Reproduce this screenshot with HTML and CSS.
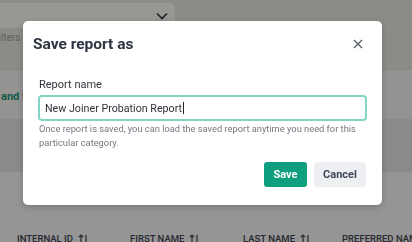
FILE: index.html
```html
<!DOCTYPE html>
<html lang="en">
<head>
    <meta charset="UTF-8">
    <meta name="viewport" content="width=device-width, initial-scale=1.0">
    <title>Save report as</title>
    <link rel="stylesheet" href="styles.css">
</head>
<body>

<div class="page">
    <div class="filter-bar">
        <div class="dropdown">
            <svg class="chevron" width="12" height="8" viewBox="0 0 12 8"><path d="M1 1.5 L6 6.5 L11 1.5" fill="none" stroke="#333" stroke-width="1.6"/></svg>
        </div>
        <div class="filter-label">Filters :</div>
    </div>
    <div class="section-head">
        <div class="section-title">and tenure details</div>
    </div>
    <div class="toolbar"></div>
    <div class="table-head">
        <div class="col">Internal ID <svg class="sort" width="10" height="9" viewBox="0 0 10 9"><path d="M3 8.5 V1 M0.8 3.2 L3 1 L5.2 3.2 M8 1 V8.5" fill="none" stroke="currentColor" stroke-width="1.2"/></svg></div>
        <div class="col">First Name <svg class="sort" width="10" height="9" viewBox="0 0 10 9"><path d="M3 8.5 V1 M0.8 3.2 L3 1 L5.2 3.2 M8 1 V8.5" fill="none" stroke="currentColor" stroke-width="1.2"/></svg></div>
        <div class="col col-short">Last Name <svg class="sort" width="10" height="9" viewBox="0 0 10 9"><path d="M3 8.5 V1 M0.8 3.2 L3 1 L5.2 3.2 M8 1 V8.5" fill="none" stroke="currentColor" stroke-width="1.2"/></svg></div>
        <div class="col">Preferred Name</div>
    </div>
</div>

<div class="overlay"></div>

<div class="modal">
    <div class="modal-header">
        <div class="modal-title">Save report as</div>
        <svg class="close" width="10" height="10" viewBox="0 0 10 10"><path d="M1 1 L9 9 M9 1 L1 9" fill="none" stroke="#555c66" stroke-width="1.3"/></svg>
    </div>
    <div class="modal-body">
        <div class="field-label">Report name</div>
        <div class="text-input">New Joiner Probation Report<span class="caret"></span></div>
        <div class="help">Once report is saved, you can load the saved report anytime you need for this particular category.</div>
    </div>
    <div class="modal-footer">
        <div class="btn btn-save">Save</div>
        <div class="btn btn-cancel">Cancel</div>
    </div>
</div>

</body>
</html>
```

FILE: styles.css
```css
body {
    margin: 0;
    font-family: Roboto, "Liberation Sans", sans-serif;
    overflow: hidden;
}
.page {
    width: 412px;
    height: 242px;
    background: #f8f8f8;
}
.filter-bar {
    height: 70px;
    background: #ebe8e3;
    border-bottom: 1px solid #e2dfda;
    padding-top: 3px;
    box-sizing: border-box;
}
.dropdown {
    margin-left: -12px;
    width: 187px;
    height: 25px;
    background: #fffcf7;
    border-radius: 5px;
    display: flex;
    align-items: center;
    justify-content: flex-end;
    padding-right: 7px;
    box-sizing: border-box;
}
.filter-label {
    margin-left: -7px;
    margin-top: 4px;
    font-size: 10px;
    color: #a09e99;
}
.section-head {
    height: 49px;
    background: #f7f5f2;
    display: flex;
    align-items: center;
    padding-top: 3px;
    box-sizing: border-box;
}
.section-title {
    font-size: 11px;
    font-weight: 700;
    color: #18987b;
    margin-left: 1px;
}
.toolbar {
    height: 53px;
    background: #e6e6e6;
}
.table-head {
    display: flex;
    padding: 61px 0 0 17px;
}
.col {
    width: 113px;
    flex-shrink: 0;
    font-size: 9.5px;
    font-weight: 500;
    text-transform: uppercase;
    color: #41464f;
    white-space: nowrap;
    display: flex;
    align-items: center;
    gap: 5px;
}
.col-short {
    width: 99px;
}
.overlay {
    position: fixed;
    inset: 0;
    background: rgba(0, 0, 0, 0.4);
}
.modal {
    position: absolute;
    left: 23px;
    top: 21px;
    width: 359px;
    height: 184px;
    background: #fff;
    border-radius: 5px;
    box-shadow: 0 2px 6px rgba(0, 0, 0, 0.2);
}
.modal-header {
    display: flex;
    justify-content: space-between;
    align-items: center;
    padding: 13px 19px 0 10px;
    height: 20px;
}
.modal-title {
    font-size: 15.5px;
    font-weight: 700;
    color: #2e3440;
}
.modal-body {
    padding: 24px 15px 0 15px;
}
.field-label {
    font-size: 11px;
    line-height: 14px;
    color: #30343a;
    padding-left: 1px;
    margin-bottom: 3px;
}
.text-input {
    height: 26px;
    border: 2px solid #7fd6c3;
    border-radius: 4px;
    box-sizing: border-box;
    padding-left: 5px;
    font-size: 10.7px;
    color: #2f3338;
    display: flex;
    align-items: center;
}
.caret {
    width: 1px;
    height: 12px;
    background: #222;
    margin-left: 1px;
}
.help {
    margin-top: 1px;
    font-size: 9.3px;
    line-height: 14px;
    color: #737881;
    padding-left: 1px;
    padding-right: 10px;
}
.modal-footer {
    display: flex;
    justify-content: flex-end;
    gap: 7px;
    padding: 12px 16px 0 0;
}
.btn {
    height: 25px;
    border-radius: 3px;
    font-size: 11px;
    font-weight: 700;
    display: flex;
    align-items: center;
    justify-content: center;
}
.btn-save {
    width: 43px;
    background: #0f9e7e;
    color: #fff;
}
.btn-cancel {
    width: 52px;
    background: #eeeff3;
    color: #3e4858;
}
```
